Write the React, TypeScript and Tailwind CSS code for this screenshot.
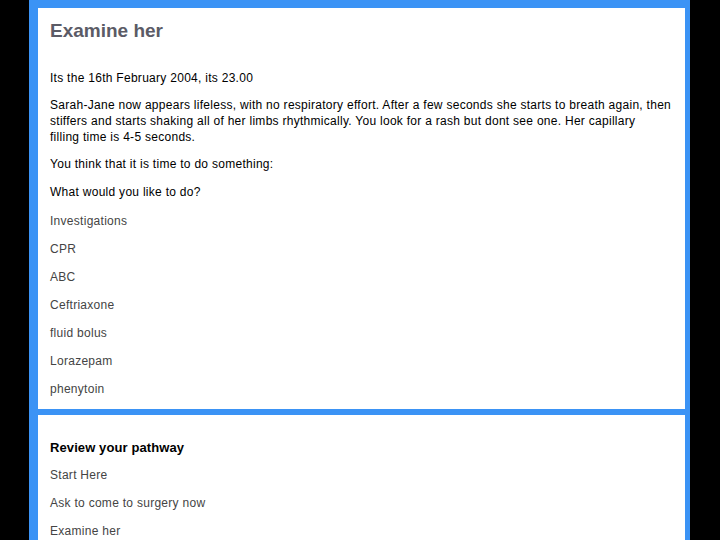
import React from "react";

const options = ["Investigations", "CPR", "ABC", "Ceftriaxone", "fluid bolus", "Lorazepam", "phenytoin"];
const pathway = ["Start Here", "Ask to come to surgery now", "Examine her"];

export default function App() {
  return (
    <div className="h-[540px] w-[720px] overflow-hidden bg-black" style={{ fontFamily: '"Liberation Sans", Arial, sans-serif' }}>
      <div className="ml-[29px] h-[540px] w-[661px] bg-[#3b93f5] pl-[9px] pr-[5px] pt-[8px]">
        <div className="flow-root bg-white px-[12px] pt-[11px]">
          <h1 className="mb-[27px] text-[19px] font-bold leading-[24px] text-[#5b5b66]">Examine her</h1>
          <p className="mb-[11px] text-[12px] leading-[16px] tracking-[0.28px] text-black">Its the 16th February 2004, its 23.00</p>
          <p className="mb-[11px] whitespace-nowrap text-[12px] leading-[16px] tracking-[0.28px] text-black">
            Sarah-Jane now appears lifeless, with no respiratory effort. After a few seconds she starts to breath again, then
            <br />
            stiffers and starts shaking all of her limbs rhythmically. You look for a rash but dont see one. Her capillary
            <br />
            filling time is 4-5 seconds.
          </p>
          <p className="mb-[12px] text-[12px] leading-[16px] tracking-[0.28px] text-black">You think that it is time to do something:</p>
          <p className="mb-[13px] text-[12px] leading-[16px] tracking-[0.28px] text-black">What would you like to do?</p>
          {options.map((o) => (
            <div key={o} className="mb-[12px] text-[12px] leading-[16px] tracking-[0.28px] text-[#444]">{o}</div>
          ))}
        </div>
        <div className="mt-[6px] h-[200px] bg-white px-[12px] pt-[24px]">
          <h2 className="mb-[11px] text-[13px] font-bold leading-[17px] tracking-[0.1px] text-black">Review your pathway</h2>
          {pathway.map((o) => (
            <div key={o} className="mb-[12px] text-[12px] leading-[16px] tracking-[0.28px] text-[#444]">{o}</div>
          ))}
        </div>
      </div>
    </div>
  );
}
